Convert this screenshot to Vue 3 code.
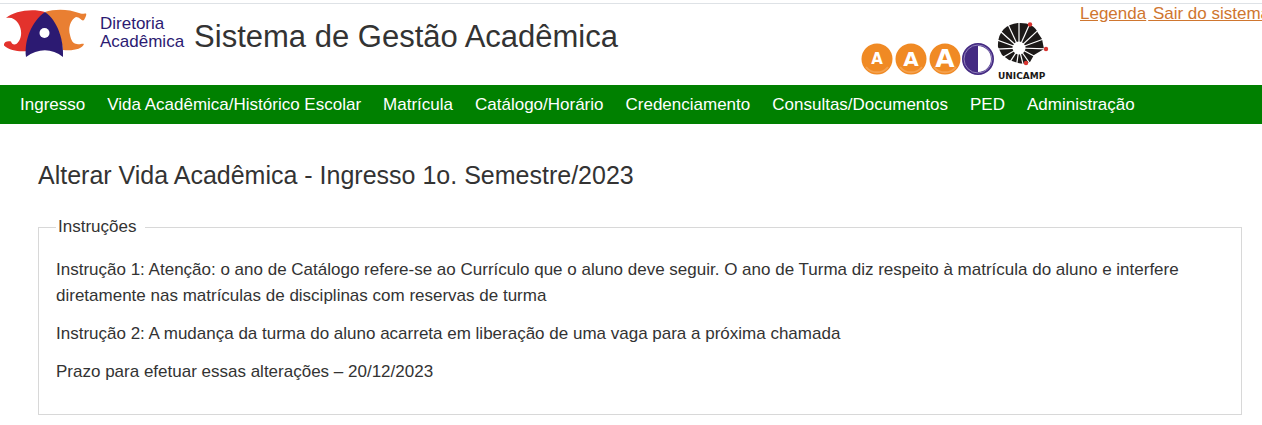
<script setup>
const menu = [
  'Ingresso',
  'Vida Acadêmica/Histórico Escolar',
  'Matrícula',
  'Catálogo/Horário',
  'Credenciamento',
  'Consultas/Documentos',
  'PED',
  'Administração',
]

const fontSizes = [
  { label: 'Diminuir fonte', size: 15, baseline: 22 },
  { label: 'Fonte normal', size: 20, baseline: 24 },
  { label: 'Aumentar fonte', size: 25, baseline: 25 },
]

const rays = [0, 24, 47, 70, 92, 118, 145, 166, 188, 213, 240, 267, 290, 312, 335]
</script>

<template>
  <div class="page">
    <header class="header">
      <a class="brand" href="#" aria-label="Diretoria Acadêmica">
        <svg class="brand-mark" viewBox="0 0 84 50" aria-hidden="true">
          <path fill="#e3322c" d="M2 9C10 2 28 -1 41 3C31 14 25 28 23.500 42C16 43 6 42 0 36.500C-.5 33 3 31.500 7 32.500C8 36 12 37 15 32C18 27 18 20 14 14C11 10 8 8 2 9Z" />
          <path fill="#e97f32" d="M41 3C51 -.5 65 0 75 4C78 5.500 80 4 82 4.500C83 6 81 9 80 11C78 13 76 8 72 8C66 11 64 20 66 26C67 31 69 35 73 35C76 36 78 34 80 35C78 40 70 42 59 41C57 26 52 13 41 3Z" />
          <path fill="#2c1a72" d="M41 3C54 12 60 32 59 48C48 39 34 39 22 48C20 31 28 12 41 3Z" />
          <circle cx="40.500" cy="24" r="5" fill="#fff" />
        </svg>
        <span class="brand-text">Diretoria<br />Acadêmica</span>
      </a>
      <h1 class="title">Sistema de Gestão Acadêmica</h1>

      <div class="tools">
        <button v-for="item in fontSizes" :key="item.label" class="tool" type="button" :aria-label="item.label">
          <svg viewBox="0 0 34 34" aria-hidden="true">
            <circle cx="17" cy="17" r="15.500" fill="#f08a24" />
            <path d="M6 25A14 14 0 0 0 28 25" fill="none" stroke="#f4a14e" stroke-width="2" />
            <text x="17" :y="item.baseline" :font-size="item.size" text-anchor="middle" class="tool-letter">A</text>
          </svg>
        </button>
        <button class="tool" type="button" aria-label="Contraste">
          <svg viewBox="0 0 34 34" aria-hidden="true">
            <circle cx="16" cy="17" r="14.500" fill="#fff" stroke="#442a82" stroke-width="3" />
            <path d="M16 3A14 14 0 0 0 16 31Z" fill="#442a82" />
            <circle cx="16" cy="17" r="14" fill="none" stroke="#8f80bb" stroke-width="1" />
          </svg>
        </button>
        <a class="unicamp" href="#" aria-label="Unicamp">
          <svg viewBox="0 0 54 60" aria-hidden="true">
            <path fill="#1c1918" d="M24 2C33 2 39 5 42 12L46 18L48 28L38 34L34 41C31 43 27 43 22 42L13 39L6 34L2 26C1 11 11 2 24 2Z" />
            <g stroke="#fff" stroke-width="1.200">
              <line v-for="angle in rays" :key="angle" x1="23" y1="27" x2="23" y2="0" :transform="`rotate(${angle} 23 27)`" />
            </g>
            <circle cx="23" cy="27" r="6.500" fill="#fff" />
            <g fill="#d93430">
              <circle cx="34" cy="3.500" r="2.200" />
              <circle cx="50" cy="28" r="2.200" />
              <circle cx="30" cy="42" r="2.200" />
            </g>
            <text x="2" y="58" class="unicamp-name">UNICAMP</text>
          </svg>
        </a>
      </div>

      <div class="links">
        <a href="#">Legenda</a><a href="#">&nbsp;Sair do sistema</a>
      </div>
    </header>

    <nav class="menu">
      <a v-for="item in menu" :key="item" href="#">{{ item }}</a>
    </nav>

    <main class="content">
      <h2>Alterar Vida Acadêmica - Ingresso 1o. Semestre/2023</h2>
      <fieldset>
        <legend>Instruções</legend>
        <p>Instrução 1: Atenção: o ano de Catálogo refere-se ao Currículo que o aluno deve seguir. O ano de Turma diz respeito à matrícula do aluno e interfere diretamente nas matrículas de disciplinas com reservas de turma</p>
        <p>Instrução 2: A mudança da turma do aluno acarreta em liberação de uma vaga para a próxima chamada</p>
        <p>Prazo para efetuar essas alterações – 20/12/2023</p>
      </fieldset>
    </main>
  </div>
</template>

<style>
body {
  background: #fff;
}
</style>

<style scoped>
.page {
  padding-top: 3px;
  font: 17px/26px "Liberation Sans", Arial, sans-serif;
  color: #333;
}

.header {
  display: flex;
  align-items: flex-start;
  height: 82px;
  box-sizing: border-box;
  padding-left: 4px;
  border-top: 1px solid #dee2e6;
  overflow: hidden;
}

.brand {
  display: flex;
  gap: 12px;
  padding-top: 5px;
  color: #2c1a72;
  text-decoration: none;
}

.brand-mark {
  width: 84px;
  height: 50px;
}

.brand-text {
  padding-top: 6px;
  line-height: 18px;
}

.title {
  margin: 14px 0 0 10px;
  font-size: 31px;
  font-weight: 400;
  line-height: 38px;
  white-space: nowrap;
}

.tools {
  display: flex;
  align-items: flex-end;
  margin-left: auto;
  padding-top: 17px;
}

.tool {
  width: 34px;
  height: 34px;
  margin-bottom: 5px;
  padding: 0;
  border: 0;
  background: none;
}

.tool svg,
.unicamp svg {
  display: block;
  width: 100%;
  height: 100%;
}

.tool-letter {
  fill: #fff;
  font-family: "DejaVu Sans", sans-serif;
  font-weight: 700;
}

.unicamp {
  width: 54px;
  height: 60px;
}

.unicamp-name {
  font: 700 9px "DejaVu Sans", sans-serif;
  fill: #1c1918;
}

.links {
  display: flex;
  gap: 2px;
  width: 182px;
  margin-left: 30px;
  line-height: 20px;
  white-space: nowrap;
  overflow: hidden;
}

.links a {
  color: #cf762f;
}

.menu {
  display: flex;
  gap: 22px;
  padding: 7px 20px 6px;
  background: #008000;
  white-space: nowrap;
}

.menu a {
  color: #fff;
  text-decoration: none;
}

.content {
  padding: 34px 20px 11px 38px;
}

h2 {
  margin: 0 0 26px;
  font-size: 25px;
  font-weight: 400;
  line-height: 34px;
}

fieldset {
  min-width: 0;
  margin: 0;
  padding: 9px 17px 17px;
  border: 1px solid #d8d8d8;
}

legend {
  padding: 0 9px 0 2px;
  line-height: 18px;
}

p {
  margin: 12px 0;
}
</style>
